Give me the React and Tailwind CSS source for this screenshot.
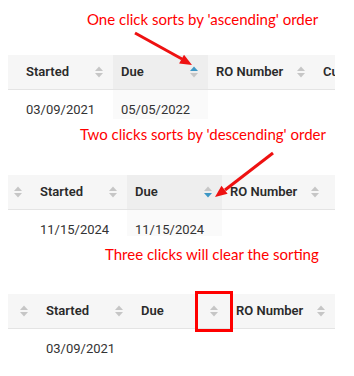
const BLUE = '#3d97c5'
const GRAY = '#c6c6c6'

function SortIcon({ state = 'none' }) {
  return (
    <svg width="8" height="12" viewBox="0 0 8 12" className="shrink-0">
      <path d="M4 0.5 L8 5 L0 5Z" fill={state === 'asc' ? BLUE : GRAY} />
      <path d="M0 7 L8 7 L4 11.5Z" fill={state === 'desc' ? BLUE : GRAY} />
    </svg>
  )
}

function HeadCell({ label, width, state, active }) {
  return (
    <div
      className={`${width} shrink-0 h-full flex items-center justify-between pl-2 pr-[10px] ${
        active ? 'bg-[#eeeeee]' : ''
      }`}
    >
      <span className="text-[13px] font-semibold text-[#2a2a2a] whitespace-nowrap">{label}</span>
      {label !== 'Cu' && <SortIcon state={state} />}
    </div>
  )
}

function BodyCell({ width, active, children, link }) {
  return (
    <div
      className={`${width} shrink-0 h-full pl-2 ${link ? 'pt-[21px]' : 'pt-[7px]'} ${
        active ? 'bg-[#fafafa]' : ''
      }`}
    >
      <span
        className={`text-[13px] leading-[18px] whitespace-nowrap ${
          link ? 'text-[#4a90c8]' : 'text-[#333333]'
        }`}
      >
        {children}
      </span>
    </div>
  )
}

function SortTable({ shift, dueState, highlight, date, due, ro, bodyHeight }) {
  return (
    <div className="ml-2 w-[327px] overflow-hidden">
      <div className={`flex h-[35px] bg-[#f6f6f6] border-b border-[#e4e4e4] ${shift}`}>
        <HeadCell label="" width="w-[95px]" />
        <HeadCell label="Started" width="w-[95px]" />
        <HeadCell label="Due" width="w-[95px]" state={dueState} active={highlight} />
        <HeadCell label="RO Number" width="w-[107px]" />
        <HeadCell label="Cu" width="w-[100px]" />
      </div>
      <div className={`flex ${bodyHeight} overflow-hidden ${shift}`}>
        <BodyCell width="w-[95px]" />
        <BodyCell width="w-[95px]">{date}</BodyCell>
        <BodyCell width="w-[95px]" active={highlight}>{due}</BodyCell>
        <BodyCell width="w-[107px]" link>{ro}</BodyCell>
        <BodyCell width="w-[100px]" link>Ca</BodyCell>
      </div>
    </div>
  )
}

function Note({ children, className }) {
  return (
    <div className={className}>
      <p className="text-[15px] leading-[20px] text-[#ff0000] whitespace-nowrap" style={{ fontFamily: 'Lato, "Open Sans", sans-serif' }}>
        {children}
      </p>
    </div>
  )
}

export default function App() {
  return (
    <div className="relative w-[354px] h-[376px] bg-white overflow-hidden" style={{ fontFamily: 'Roboto, "Noto Sans", sans-serif' }}>
      <Note className="h-[55px] pl-[87px] pt-[9px]">One click sorts by 'ascending' order</Note>
      <SortTable shift="-ml-[85px]" dueState="asc" highlight date="03/09/2021" due="05/05/2022" ro="7671" bodyHeight="h-[29px]" />

      <Note className="h-[56px] pl-[80px] pt-[5px]">Two clicks sorts by 'descending' order</Note>
      <SortTable shift="-ml-[71px]" dueState="desc" highlight date="11/15/2024" due="11/15/2024" ro="10777" bodyHeight="h-[26px]" />

      <Note className="h-[58px] pl-[105px] pt-[8px]">Three clicks will clear the sorting</Note>
      <SortTable shift="-ml-[65px]" dueState="none" date="03/09/2021" due="" ro="7671" bodyHeight="h-[28px]" />

      {/* annotation overlays */}
      <svg className="absolute left-0 top-0 pointer-events-none" width="354" height="376">
        <line x1="135" y1="33" x2="182" y2="59" stroke="#ee1111" strokeWidth="3" />
        <polygon points="192,65 179.1,63.5 184,54.8" fill="#ee1111" />
        <line x1="273" y1="153" x2="225" y2="190" stroke="#ee1111" strokeWidth="3" />
        <polygon points="215,197 221.5,185.8 227.6,193.7" fill="#ee1111" />
      </svg>
      <div className="absolute left-[195px] top-[291px] w-[38px] h-[41px] border-[3px] border-[#ff0000]" />
    </div>
  )
}
